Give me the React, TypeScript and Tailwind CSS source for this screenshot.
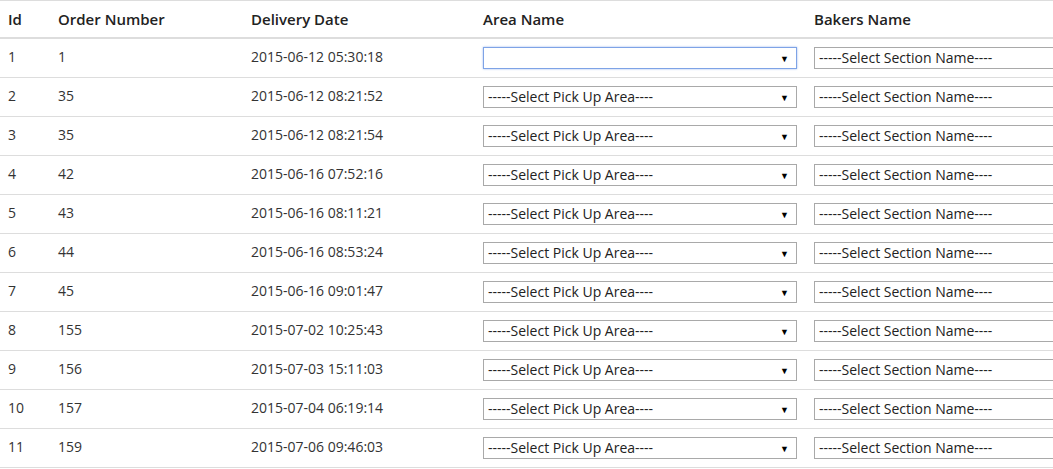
import React from 'react';

interface OrderRow {
  id: number;
  orderNumber: number;
  deliveryDate: string;
}

const rows: OrderRow[] = [
  { id: 1, orderNumber: 1, deliveryDate: '2015-06-12 05:30:18' },
  { id: 2, orderNumber: 35, deliveryDate: '2015-06-12 08:21:52' },
  { id: 3, orderNumber: 35, deliveryDate: '2015-06-12 08:21:54' },
  { id: 4, orderNumber: 42, deliveryDate: '2015-06-16 07:52:16' },
  { id: 5, orderNumber: 43, deliveryDate: '2015-06-16 08:11:21' },
  { id: 6, orderNumber: 44, deliveryDate: '2015-06-16 08:53:24' },
  { id: 7, orderNumber: 45, deliveryDate: '2015-06-16 09:01:47' },
  { id: 8, orderNumber: 155, deliveryDate: '2015-07-02 10:25:43' },
  { id: 9, orderNumber: 156, deliveryDate: '2015-07-03 15:11:03' },
  { id: 10, orderNumber: 157, deliveryDate: '2015-07-04 06:19:14' },
  { id: 11, orderNumber: 159, deliveryDate: '2015-07-06 09:46:03' },
];

function FakeSelect({ label, focused }: { label: string; focused?: boolean }) {
  return (
    <div
      className={`flex items-center justify-between w-[314px] h-[22px] pl-[4px] pr-[7px] bg-white text-[14px] leading-none text-[#222] border ${
        focused ? 'border-[#7ea3e6] shadow-[0_0_2px_#9bb9ee]' : 'border-[#a9a9a9]'
      }`}
    >
      <span className="whitespace-nowrap">{label}</span>
      <span className="text-[9px] text-black leading-none">▼</span>
    </div>
  );
}

export default function App() {
  return (
    <div className="w-[1053px] h-[469px] overflow-hidden bg-white text-[14px] text-[#333] font-['Open_Sans',sans-serif]">
      <table className="w-[1300px] table-fixed border-collapse border-t border-[#ddd]">
        <colgroup>
          <col className="w-[50px]" />
          <col className="w-[193px]" />
          <col className="w-[232px]" />
          <col className="w-[331px]" />
          <col />
        </colgroup>
        <thead>
          <tr className="border-b-2 border-[#ddd] text-[15px] text-[#222]">
            <th className="px-2 py-2 text-left font-semibold leading-5">Id</th>
            <th className="px-2 py-2 text-left font-semibold leading-5">Order Number</th>
            <th className="px-2 py-2 text-left font-semibold leading-5">Delivery Date</th>
            <th className="px-2 py-2 text-left font-semibold leading-5">Area Name</th>
            <th className="px-2 py-2 text-left font-semibold leading-5">Bakers Name</th>
          </tr>
        </thead>
        <tbody>
          {rows.map((row, i) => (
            <tr key={row.id} className="border-b border-[#ddd]">
              <td className="px-2 pt-[7px] pb-[9px] align-middle leading-5">{row.id}</td>
              <td className="px-2 pt-[7px] pb-[9px] align-middle leading-5">{row.orderNumber}</td>
              <td className="px-2 pt-[7px] pb-[9px] align-middle leading-5">{row.deliveryDate}</td>
              <td className="px-2 py-2 align-middle">
                <FakeSelect label={i === 0 ? '' : '-----Select Pick Up Area----'} focused={i === 0} />
              </td>
              <td className="px-2 py-2 align-middle">
                <FakeSelect label="-----Select Section Name----" />
              </td>
            </tr>
          ))}
        </tbody>
      </table>
    </div>
  );
}
